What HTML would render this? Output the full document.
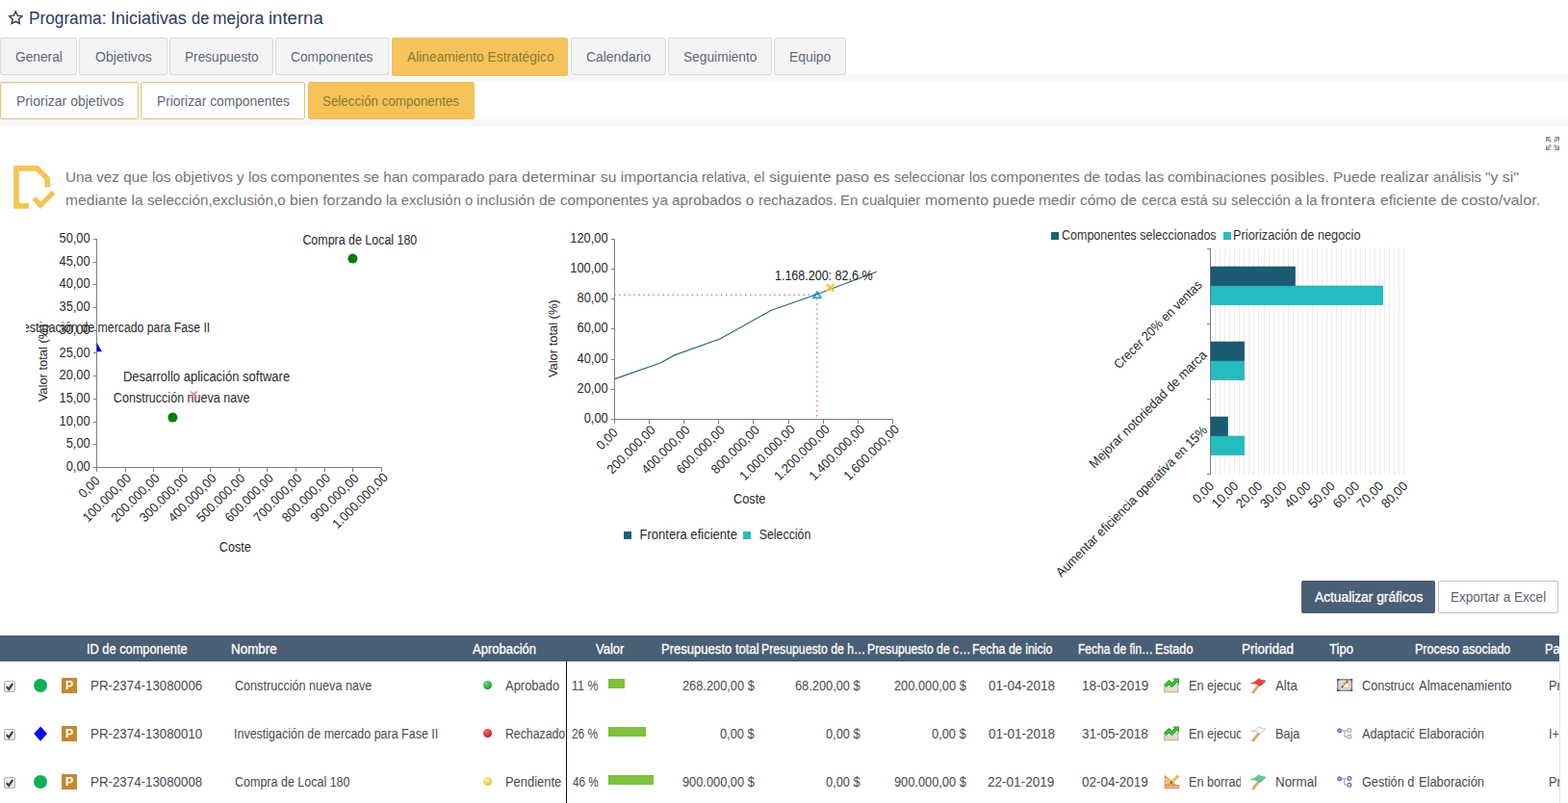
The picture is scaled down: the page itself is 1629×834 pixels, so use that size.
<!DOCTYPE html>
<html lang="es"><head><meta charset="utf-8"><title>Programa: Iniciativas de mejora interna</title>
<style>
html,body{margin:0;padding:0;}
body{width:1629px;height:834px;overflow:hidden;background:#fff;position:relative;
 font-family:"Liberation Sans",sans-serif;color:#444;}
.t{position:absolute;white-space:nowrap;line-height:1;transform-origin:0 0;display:block;}
.b{position:absolute;box-sizing:border-box;}
.tab{position:absolute;box-sizing:border-box;top:39px;height:39px;border:1px solid #dadada;border-radius:2px;background:#f4f4f4;}
.tab.sel{background:#f6c35a;border-color:#e9c06c;height:40px;}
.tab2{position:absolute;box-sizing:border-box;top:85px;height:39px;border:1px solid #e6c37c;border-radius:2px;background:#fff;box-shadow:inset 0 0 0 1px #fffae2;}
.tab2.sel{background:#f6c35a;border-color:#e9c06c;box-shadow:none;}
.strip{position:absolute;left:0;width:1629px;background:#f7f7f7;}
.clip{position:absolute;overflow:hidden;}
svg{position:absolute;left:0;top:0;overflow:visible;}
svg text{font-family:"Liberation Sans",sans-serif;}
</style></head><body>
<svg width="40" height="36" viewBox="0 0 40 36"><path d="M16.30 12.00 L18.30 16.15 L22.86 16.77 L19.53 19.95 L20.36 24.48 L16.30 22.30 L12.24 24.48 L13.07 19.95 L9.74 16.77 L14.30 16.15 Z" fill="none" stroke="#2b3b5c" stroke-width="1.45" stroke-linejoin="miter" stroke-miterlimit="10"/></svg>
<h1 style="margin:0;font-weight:normal"><span class="t" style="left:29.61px;top:10px;font-size:18px;transform:scaleX(0.9570);color:#2b3b5c">Programa: </span><span class="t" style="left:114.75px;top:10px;font-size:18px;transform:scaleX(0.9972);color:#2b3b5c">Iniciativas </span><span class="t" style="left:198.62px;top:10px;font-size:18px;transform:scaleX(0.9126);color:#2b3b5c">de </span><span class="t" style="left:221.39px;top:10px;font-size:18px;transform:scaleX(0.9672);color:#2b3b5c">mejora </span><span class="t" style="left:279.36px;top:10px;font-size:18px;transform:scaleX(1.0315);color:#2b3b5c">interna</span></h1>
<div class="strip" style="top:78px;height:7px"></div>
<div class="strip" style="top:124px;height:7px"></div>
<div class="tab" style="left:0px;width:80.0px"></div>
<span class="t" style="left:15.91px;top:52px;font-size:14px;transform:scaleX(0.9813);color:#5d6879;">General</span>
<div class="tab" style="left:82px;width:92.0px"></div>
<span class="t" style="left:98.55px;top:52px;font-size:14px;transform:scaleX(1.0070);color:#5d6879;">Objetivos</span>
<div class="tab" style="left:176px;width:108.0px"></div>
<span class="t" style="left:192.13px;top:52px;font-size:14px;transform:scaleX(0.9753);color:#5d6879;">Presupuesto</span>
<div class="tab" style="left:286px;width:118.0px"></div>
<span class="t" style="left:302.21px;top:52px;font-size:14px;transform:scaleX(0.9796);color:#5d6879;">Componentes</span>
<div class="tab sel" style="left:407px;width:183.4px"></div>
<span class="t" style="left:422.60px;top:52px;font-size:14px;transform:scaleX(0.9851);color:#8a7a2e;">Alineamiento Estratégico</span>
<div class="tab" style="left:593px;width:99.0px"></div>
<span class="t" style="left:609.31px;top:52px;font-size:14px;transform:scaleX(0.9910);color:#5d6879;">Calendario</span>
<div class="tab" style="left:694px;width:108.0px"></div>
<span class="t" style="left:709.81px;top:52px;font-size:14px;transform:scaleX(0.9824);color:#5d6879;">Seguimiento</span>
<div class="tab" style="left:804px;width:75.0px"></div>
<span class="t" style="left:819.81px;top:52px;font-size:14px;transform:scaleX(0.9928);color:#5d6879;">Equipo</span>
<div class="tab2" style="left:0px;width:144.0px"></div>
<span class="t" style="left:16.50px;top:98px;font-size:14px;transform:scaleX(1.0023);color:#5d6879;">Priorizar objetivos</span>
<div class="tab2" style="left:146px;width:171.0px"></div>
<span class="t" style="left:162.92px;top:98px;font-size:14px;transform:scaleX(0.9845);color:#5d6879;">Priorizar componentes</span>
<div class="tab2 sel" style="left:319.5px;width:173.5px"></div>
<span class="t" style="left:335.23px;top:98px;font-size:14px;transform:scaleX(0.9556);color:#8a7a2e;">Selección componentes</span>
<svg width="1629" height="170" viewBox="0 0 1629 170"><path d="M1606 142 L1610.6 142 L1606 146.6 Z" fill="#c4c4c4" stroke="none"/><path d="M1607.6 143.6 L1610.4 146.4" stroke="#8c8c8c" stroke-width="2.6" stroke-linecap="round" fill="none"/><path d="M1607.8 143.8 L1610.3 146.3" stroke="#c0c0c0" stroke-width="1.3" stroke-linecap="round" fill="none"/><path d="M1610.8 142.5 H1606.5 V146.8" stroke="#868686" stroke-width="1" fill="none"/><path d="M1620 142 L1615.4 142 L1620 146.6 Z" fill="#c4c4c4" stroke="none"/><path d="M1618.4 143.6 L1615.6 146.4" stroke="#8c8c8c" stroke-width="2.6" stroke-linecap="round" fill="none"/><path d="M1618.2 143.8 L1615.7 146.3" stroke="#c0c0c0" stroke-width="1.3" stroke-linecap="round" fill="none"/><path d="M1615.2 142.5 H1619.5 V146.8" stroke="#868686" stroke-width="1" fill="none"/><path d="M1606 156 L1610.6 156 L1606 151.4 Z" fill="#c4c4c4" stroke="none"/><path d="M1607.6 154.4 L1610.4 151.6" stroke="#8c8c8c" stroke-width="2.6" stroke-linecap="round" fill="none"/><path d="M1607.8 154.2 L1610.3 151.7" stroke="#c0c0c0" stroke-width="1.3" stroke-linecap="round" fill="none"/><path d="M1610.8 155.5 H1606.5 V151.2" stroke="#868686" stroke-width="1" fill="none"/><path d="M1620 156 L1615.4 156 L1620 151.4 Z" fill="#c4c4c4" stroke="none"/><path d="M1618.4 154.4 L1615.6 151.6" stroke="#8c8c8c" stroke-width="2.6" stroke-linecap="round" fill="none"/><path d="M1618.2 154.2 L1615.7 151.7" stroke="#c0c0c0" stroke-width="1.3" stroke-linecap="round" fill="none"/><path d="M1615.2 155.5 H1619.5 V151.2" stroke="#868686" stroke-width="1" fill="none"/></svg>
<svg width="70" height="230" viewBox="0 0 70 230"><g fill="none" stroke="#f5c452" stroke-width="5.6">
<path d="M30 213.9 H17 V174.9 H38.6 L49.2 185.6 V194.3"/>
<path d="M35.3 205.6 L42 213.3 L55.6 199.6" stroke-width="5.2"/></g></svg>
<p style="margin:0"><span class="t" style="left:67.53px;top:176px;font-size:15px;transform:scaleX(1.0169);color:#757575">Una vez que los objetivos y los </span><span class="t" style="left:281.18px;top:176px;font-size:15px;transform:scaleX(1.0263);color:#757575">componentes se han </span><span class="t" style="left:428.40px;top:176px;font-size:15px;transform:scaleX(1.0026);color:#757575">comparado para </span><span class="t" style="left:542.05px;top:176px;font-size:15px;transform:scaleX(1.0771);color:#757575">determinar </span><span class="t" style="left:623.79px;top:176px;font-size:15px;transform:scaleX(1.0366);color:#757575">su importancia </span><span class="t" style="left:729.29px;top:176px;font-size:15px;transform:scaleX(0.9586);color:#757575">relativa, el </span><span class="t" style="left:798.77px;top:176px;font-size:15px;transform:scaleX(1.0743);color:#757575">siguiente paso es </span><span class="t" style="left:928.71px;top:176px;font-size:15px;transform:scaleX(0.9703);color:#757575">seleccionar los </span><span class="t" style="left:1028.98px;top:176px;font-size:15px;transform:scaleX(1.0291);color:#757575">componentes de todas las </span><span class="t" style="left:1213.49px;top:176px;font-size:15px;transform:scaleX(1.0242);color:#757575">combinaciones </span><span class="t" style="left:1320.23px;top:176px;font-size:15px;transform:scaleX(1.0217);color:#757575">posibles. </span><span class="t" style="left:1384.97px;top:176px;font-size:15px;transform:scaleX(1.0290);color:#757575">Puede realizar </span><span class="t" style="left:1488.80px;top:176px;font-size:15px;transform:scaleX(1.0020);color:#757575">análisis </span><span class="t" style="left:1543.07px;top:176px;font-size:15px;transform:scaleX(1.0485);color:#757575">"y si"</span></p>
<p style="margin:0"><span class="t" style="left:67.71px;top:200px;font-size:15px;transform:scaleX(1.0411);color:#757575">mediante la </span><span class="t" style="left:152.79px;top:200px;font-size:15px;transform:scaleX(1.0139);color:#757575">selección,exclusión,o </span><span class="t" style="left:300.70px;top:200px;font-size:15px;transform:scaleX(1.0524);color:#757575">bien forzando </span><span class="t" style="left:400.81px;top:200px;font-size:15px;transform:scaleX(0.9942);color:#757575">la exclusión o </span><span class="t" style="left:495.26px;top:200px;font-size:15px;transform:scaleX(1.0399);color:#757575">inclusión de </span><span class="t" style="left:581.99px;top:200px;font-size:15px;transform:scaleX(1.0163);color:#757575">componentes ya </span><span class="t" style="left:698.09px;top:200px;font-size:15px;transform:scaleX(1.0226);color:#757575">aprobados o </span><span class="t" style="left:787.65px;top:200px;font-size:15px;transform:scaleX(0.9961);color:#757575">rechazados. </span><span class="t" style="left:873.20px;top:200px;font-size:15px;transform:scaleX(0.9988);color:#757575">En cualquier </span><span class="t" style="left:960.60px;top:200px;font-size:15px;transform:scaleX(1.0544);color:#757575">momento puede </span><span class="t" style="left:1079.32px;top:200px;font-size:15px;transform:scaleX(1.0299);color:#757575">medir cómo de </span><span class="t" style="left:1185.80px;top:200px;font-size:15px;transform:scaleX(0.9938);color:#757575">cerca está su </span><span class="t" style="left:1278.61px;top:200px;font-size:15px;transform:scaleX(0.9857);color:#757575">selección a la </span><span class="t" style="left:1372.28px;top:200px;font-size:15px;transform:scaleX(1.0967);color:#757575">frontera </span><span class="t" style="left:1433.57px;top:200px;font-size:15px;transform:scaleX(1.0447);color:#757575">eficiente de </span><span class="t" style="left:1518.05px;top:200px;font-size:15px;transform:scaleX(1.0839);color:#757575">costo/valor.</span></p>
<svg width="1629" height="660" viewBox="0 0 1629 660" font-size="13">
<defs><clipPath id="c1"><rect x="27" y="230" width="520" height="380"/></clipPath><clipPath id="p1"><rect x="100.5" y="240" width="310" height="245"/></clipPath></defs>
<g stroke="#7f7f7f" stroke-width="1" fill="none" shape-rendering="crispEdges">
<path d="M100.5 248.5 V485.5"/>
<path d="M96.5 485.5 H396.5"/>
<path d="M96.5 485.5 H100.5"/>
<path d="M96.5 461.5 H100.5"/>
<path d="M96.5 438.5 H100.5"/>
<path d="M96.5 414.5 H100.5"/>
<path d="M96.5 390.5 H100.5"/>
<path d="M96.5 366.5 H100.5"/>
<path d="M96.5 343.5 H100.5"/>
<path d="M96.5 319.5 H100.5"/>
<path d="M96.5 295.5 H100.5"/>
<path d="M96.5 272.5 H100.5"/>
<path d="M96.5 248.5 H100.5"/>
<path d="M100.5 485.5 V490.0"/>
<path d="M130.5 485.5 V490.0"/>
<path d="M159.5 485.5 V490.0"/>
<path d="M189.5 485.5 V490.0"/>
<path d="M218.5 485.5 V490.0"/>
<path d="M248.5 485.5 V490.0"/>
<path d="M277.5 485.5 V490.0"/>
<path d="M307.5 485.5 V490.0"/>
<path d="M337.5 485.5 V490.0"/>
<path d="M366.5 485.5 V490.0"/>
<path d="M396.5 485.5 V490.0"/>
</g>
<text x="68.66" y="489.00" font-size="14" textLength="25.05" lengthAdjust="spacingAndGlyphs" fill="#2a2a2a" >0,00</text>
<text x="68.66" y="465.30" font-size="14" textLength="25.05" lengthAdjust="spacingAndGlyphs" fill="#2a2a2a" >5,00</text>
<text x="61.49" y="441.60" font-size="14" textLength="32.21" lengthAdjust="spacingAndGlyphs" fill="#2a2a2a" >10,00</text>
<text x="61.49" y="417.90" font-size="14" textLength="32.21" lengthAdjust="spacingAndGlyphs" fill="#2a2a2a" >15,00</text>
<text x="61.49" y="394.20" font-size="14" textLength="32.21" lengthAdjust="spacingAndGlyphs" fill="#2a2a2a" >20,00</text>
<text x="61.49" y="370.50" font-size="14" textLength="32.21" lengthAdjust="spacingAndGlyphs" fill="#2a2a2a" >25,00</text>
<text x="61.49" y="346.80" font-size="14" textLength="32.21" lengthAdjust="spacingAndGlyphs" fill="#2a2a2a" >30,00</text>
<text x="61.49" y="323.10" font-size="14" textLength="32.21" lengthAdjust="spacingAndGlyphs" fill="#2a2a2a" >35,00</text>
<text x="61.49" y="299.40" font-size="14" textLength="32.21" lengthAdjust="spacingAndGlyphs" fill="#2a2a2a" >40,00</text>
<text x="61.49" y="275.70" font-size="14" textLength="32.21" lengthAdjust="spacingAndGlyphs" fill="#2a2a2a" >45,00</text>
<text x="61.49" y="252.00" font-size="14" textLength="32.21" lengthAdjust="spacingAndGlyphs" fill="#2a2a2a" >50,00</text>
<text transform="translate(104.60,500.30) rotate(-45)" x="-25.05" y="0" font-size="13.6" textLength="25.05" lengthAdjust="spacingAndGlyphs" fill="#2a2a2a">0,00</text>
<text transform="translate(136.97,497.50) rotate(-45)" x="-64.41" y="0" font-size="13.6" textLength="64.41" lengthAdjust="spacingAndGlyphs" fill="#2a2a2a">100.000,00</text>
<text transform="translate(166.54,497.50) rotate(-45)" x="-64.41" y="0" font-size="13.6" textLength="64.41" lengthAdjust="spacingAndGlyphs" fill="#2a2a2a">200.000,00</text>
<text transform="translate(196.11,497.50) rotate(-45)" x="-64.41" y="0" font-size="13.6" textLength="64.41" lengthAdjust="spacingAndGlyphs" fill="#2a2a2a">300.000,00</text>
<text transform="translate(225.68,497.50) rotate(-45)" x="-64.41" y="0" font-size="13.6" textLength="64.41" lengthAdjust="spacingAndGlyphs" fill="#2a2a2a">400.000,00</text>
<text transform="translate(255.25,497.50) rotate(-45)" x="-64.41" y="0" font-size="13.6" textLength="64.41" lengthAdjust="spacingAndGlyphs" fill="#2a2a2a">500.000,00</text>
<text transform="translate(284.82,497.50) rotate(-45)" x="-64.41" y="0" font-size="13.6" textLength="64.41" lengthAdjust="spacingAndGlyphs" fill="#2a2a2a">600.000,00</text>
<text transform="translate(314.39,497.50) rotate(-45)" x="-64.41" y="0" font-size="13.6" textLength="64.41" lengthAdjust="spacingAndGlyphs" fill="#2a2a2a">700.000,00</text>
<text transform="translate(343.96,497.50) rotate(-45)" x="-64.41" y="0" font-size="13.6" textLength="64.41" lengthAdjust="spacingAndGlyphs" fill="#2a2a2a">800.000,00</text>
<text transform="translate(373.53,497.50) rotate(-45)" x="-64.41" y="0" font-size="13.6" textLength="64.41" lengthAdjust="spacingAndGlyphs" fill="#2a2a2a">900.000,00</text>
<text transform="translate(403.90,496.70) rotate(-45)" x="-75.14" y="0" font-size="13.6" textLength="75.14" lengthAdjust="spacingAndGlyphs" fill="#2a2a2a">1.000.000,00</text>
<text x="227.79" y="573.00" font-size="14" textLength="32.91" lengthAdjust="spacingAndGlyphs" fill="#2a2a2a" >Coste</text>
<g clip-path="url(#c1)">
<text transform="translate(48.80,417.30) rotate(-90)" x="0" y="0" font-size="13.6" textLength="80.80" lengthAdjust="spacingAndGlyphs" fill="#2a2a2a">Valor total (%)</text>
<text x="6.82" y="345.00" font-size="14" textLength="91.60" lengthAdjust="spacingAndGlyphs" fill="#2a2a2a" >Investigación de</text>
<text x="101.61" y="345.00" font-size="14" textLength="116.64" lengthAdjust="spacingAndGlyphs" fill="#2a2a2a" >mercado para Fase II</text>
</g>
<text x="314.38" y="253.90" font-size="14" textLength="118.92" lengthAdjust="spacingAndGlyphs" fill="#2a2a2a" >Compra de Local 180</text>
<text x="127.88" y="396.20" font-size="14" textLength="173.28" lengthAdjust="spacingAndGlyphs" fill="#2a2a2a" >Desarrollo aplicación software</text>
<text x="117.87" y="418.10" font-size="14" textLength="141.65" lengthAdjust="spacingAndGlyphs" fill="#2a2a2a" >Construcción nueva nave</text>
<circle cx="366.4" cy="268.6" r="5" fill="#0a7d0a"/>
<circle cx="179.4" cy="433.6" r="5" fill="#0a7d0a"/>
<path d="M198.3 406.6 L204.7 413 M204.7 406.6 L198.3 413" stroke="#ee7d86" stroke-width="1.6" fill="none"/>
<path d="M100.5 355.6 L105.9 365.2 H95.1 Z" fill="#0000d0" clip-path="url(#p1)"/>
<g stroke="#7f7f7f" stroke-width="1" fill="none" shape-rendering="crispEdges">
<path d="M638.5 248.5 V435.5"/>
<path d="M634.5 435.5 H927.5"/>
<path d="M634.5 435.5 H638.5"/>
<path d="M634.5 404.5 H638.5"/>
<path d="M634.5 373.5 H638.5"/>
<path d="M634.5 341.5 H638.5"/>
<path d="M634.5 310.5 H638.5"/>
<path d="M634.5 279.5 H638.5"/>
<path d="M634.5 248.5 H638.5"/>
<path d="M638.5 435.5 V440.0"/>
<path d="M674.5 435.5 V440.0"/>
<path d="M710.5 435.5 V440.0"/>
<path d="M746.5 435.5 V440.0"/>
<path d="M782.5 435.5 V440.0"/>
<path d="M819.5 435.5 V440.0"/>
<path d="M855.5 435.5 V440.0"/>
<path d="M891.5 435.5 V440.0"/>
<path d="M927.5 435.5 V440.0"/>
</g>
<text x="606.66" y="439.00" font-size="14" textLength="25.05" lengthAdjust="spacingAndGlyphs" fill="#2a2a2a" >0,00</text>
<text x="599.49" y="407.83" font-size="14" textLength="32.21" lengthAdjust="spacingAndGlyphs" fill="#2a2a2a" >20,00</text>
<text x="599.49" y="376.66" font-size="14" textLength="32.21" lengthAdjust="spacingAndGlyphs" fill="#2a2a2a" >40,00</text>
<text x="599.49" y="345.49" font-size="14" textLength="32.21" lengthAdjust="spacingAndGlyphs" fill="#2a2a2a" >60,00</text>
<text x="599.49" y="314.32" font-size="14" textLength="32.21" lengthAdjust="spacingAndGlyphs" fill="#2a2a2a" >80,00</text>
<text x="592.32" y="283.15" font-size="14" textLength="39.36" lengthAdjust="spacingAndGlyphs" fill="#2a2a2a" >100,00</text>
<text x="592.32" y="251.98" font-size="14" textLength="39.36" lengthAdjust="spacingAndGlyphs" fill="#2a2a2a" >120,00</text>
<text transform="translate(642.60,450.30) rotate(-45)" x="-25.05" y="0" font-size="13.6" textLength="25.05" lengthAdjust="spacingAndGlyphs" fill="#2a2a2a">0,00</text>
<text transform="translate(681.52,447.50) rotate(-45)" x="-64.41" y="0" font-size="13.6" textLength="64.41" lengthAdjust="spacingAndGlyphs" fill="#2a2a2a">200.000,00</text>
<text transform="translate(717.64,447.50) rotate(-45)" x="-64.41" y="0" font-size="13.6" textLength="64.41" lengthAdjust="spacingAndGlyphs" fill="#2a2a2a">400.000,00</text>
<text transform="translate(753.76,447.50) rotate(-45)" x="-64.41" y="0" font-size="13.6" textLength="64.41" lengthAdjust="spacingAndGlyphs" fill="#2a2a2a">600.000,00</text>
<text transform="translate(789.88,447.50) rotate(-45)" x="-64.41" y="0" font-size="13.6" textLength="64.41" lengthAdjust="spacingAndGlyphs" fill="#2a2a2a">800.000,00</text>
<text transform="translate(826.80,446.70) rotate(-45)" x="-75.14" y="0" font-size="13.6" textLength="75.14" lengthAdjust="spacingAndGlyphs" fill="#2a2a2a">1.000.000,00</text>
<text transform="translate(862.92,446.70) rotate(-45)" x="-75.14" y="0" font-size="13.6" textLength="75.14" lengthAdjust="spacingAndGlyphs" fill="#2a2a2a">1.200.000,00</text>
<text transform="translate(899.04,446.70) rotate(-45)" x="-75.14" y="0" font-size="13.6" textLength="75.14" lengthAdjust="spacingAndGlyphs" fill="#2a2a2a">1.400.000,00</text>
<text transform="translate(935.16,446.70) rotate(-45)" x="-75.14" y="0" font-size="13.6" textLength="75.14" lengthAdjust="spacingAndGlyphs" fill="#2a2a2a">1.600.000,00</text>
<text x="762.06" y="523.00" font-size="14" textLength="33.26" lengthAdjust="spacingAndGlyphs" fill="#2a2a2a" >Coste</text>
<text transform="translate(579.30,392.10) rotate(-90)" x="0" y="0" font-size="13.6" textLength="80.80" lengthAdjust="spacingAndGlyphs" fill="#2a2a2a">Valor total (%)</text>
<path d="M638.2 306.3 H848.9 M848.9 310.2 V435" fill="none" stroke="#dd7a96" stroke-width="1.5" stroke-dasharray="1.5 3.53"/>
<path d="M848.9 303.3 L852.7 309.3 H845.1 Z" fill="none" stroke="#2ab0b2" stroke-width="2"/>
<path d="M638.5 393.6 L686.7 376.7 L700.6 368.9 L747.9 352 L801.3 322.3 L847.8 306 L910.8 282.3" fill="none" stroke="#256779" stroke-width="1.15"/>
<path d="M858.6 295.2 L866.4 302.4 M866.4 295.2 L858.6 302.4" stroke="#f4c421" stroke-width="2.1" fill="none"/>
<text x="804.96" y="291.10" font-size="14" textLength="101.58" lengthAdjust="spacingAndGlyphs" fill="#222" >1.168.200: 82,6 %</text>
<rect x="648" y="552" width="8" height="8" fill="#1d5f75"/>
<text x="664.48" y="560.00" font-size="14" textLength="101.48" lengthAdjust="spacingAndGlyphs" fill="#2a2a2a" >Frontera eficiente</text>
<rect x="772" y="552" width="8" height="8" fill="#27bcc0"/>
<text x="788.77" y="560.00" font-size="14" textLength="53.52" lengthAdjust="spacingAndGlyphs" fill="#2a2a2a" >Selección</text>
<g stroke="#ebebeb" stroke-width="1" fill="none" shape-rendering="crispEdges">
<path d="M1262.5 258 V492.5"/>
<path d="M1267.5 258 V492.5"/>
<path d="M1272.5 258 V492.5"/>
<path d="M1277.5 258 V492.5"/>
<path d="M1282.5 258 V492.5"/>
<path d="M1287.5 258 V492.5"/>
<path d="M1292.5 258 V492.5"/>
<path d="M1297.5 258 V492.5"/>
<path d="M1302.5 258 V492.5"/>
<path d="M1307.5 258 V492.5"/>
<path d="M1313.5 258 V492.5"/>
<path d="M1318.5 258 V492.5"/>
<path d="M1323.5 258 V492.5"/>
<path d="M1328.5 258 V492.5"/>
<path d="M1333.5 258 V492.5"/>
<path d="M1338.5 258 V492.5"/>
<path d="M1343.5 258 V492.5"/>
<path d="M1348.5 258 V492.5"/>
<path d="M1353.5 258 V492.5"/>
<path d="M1358.5 258 V492.5"/>
<path d="M1363.5 258 V492.5"/>
<path d="M1368.5 258 V492.5"/>
<path d="M1373.5 258 V492.5"/>
<path d="M1378.5 258 V492.5"/>
<path d="M1383.5 258 V492.5"/>
<path d="M1388.5 258 V492.5"/>
<path d="M1393.5 258 V492.5"/>
<path d="M1398.5 258 V492.5"/>
<path d="M1403.5 258 V492.5"/>
<path d="M1408.5 258 V492.5"/>
<path d="M1413.5 258 V492.5"/>
<path d="M1418.5 258 V492.5"/>
<path d="M1423.5 258 V492.5"/>
<path d="M1428.5 258 V492.5"/>
<path d="M1433.5 258 V492.5"/>
<path d="M1438.5 258 V492.5"/>
<path d="M1443.5 258 V492.5"/>
<path d="M1448.5 258 V492.5"/>
<path d="M1453.5 258 V492.5"/>
<path d="M1458.5 258 V492.5"/>
</g>
<g stroke="#7f7f7f" stroke-width="1" fill="none" shape-rendering="crispEdges">
<path d="M1257.5 258 V493"/>
<path d="M1254 258.5 H1257.5"/>
<path d="M1254 336.5 H1257.5"/>
<path d="M1254 414.5 H1257.5"/>
<path d="M1254 492.5 H1257.5"/>
</g>
<rect x="1258" y="277" width="87.5" height="20" fill="#1b5b73" stroke="#174e63" stroke-width="0.6"/>
<rect x="1258" y="297" width="178.7" height="19.6" fill="#25bcc0" stroke="#1fa3a7" stroke-width="0.6"/>
<rect x="1258" y="355" width="34.7" height="20" fill="#1b5b73" stroke="#174e63" stroke-width="0.6"/>
<rect x="1258" y="375" width="34.7" height="19.6" fill="#25bcc0" stroke="#1fa3a7" stroke-width="0.6"/>
<rect x="1258" y="433" width="17.6" height="20" fill="#1b5b73" stroke="#174e63" stroke-width="0.6"/>
<rect x="1258" y="453" width="34.7" height="19.6" fill="#25bcc0" stroke="#1fa3a7" stroke-width="0.6"/>
<rect x="1092" y="241" width="8" height="8" fill="#1d5f75"/>
<text x="1102.97" y="249.00" font-size="14" textLength="160.65" lengthAdjust="spacingAndGlyphs" fill="#333" >Componentes seleccionados</text>
<rect x="1271" y="241" width="8" height="8" fill="#27bcc0"/>
<text x="1281.10" y="249.00" font-size="14" textLength="132.43" lengthAdjust="spacingAndGlyphs" fill="#333" >Priorización de negocio</text>
<text transform="translate(1249.70,296.70) rotate(-45)" x="-123.00" y="0" font-size="13.6" textLength="123.00" lengthAdjust="spacingAndGlyphs" fill="#2a2a2a">Crecer 20% en ventas</text>
<text transform="translate(1254.50,369.60) rotate(-45)" x="-166.00" y="0" font-size="13.6" textLength="166.00" lengthAdjust="spacingAndGlyphs" fill="#2a2a2a">Mejorar notoriedad de marca</text>
<text transform="translate(1255.00,447.60) rotate(-45)" x="-215.50" y="0" font-size="13.6" textLength="215.50" lengthAdjust="spacingAndGlyphs" fill="#2a2a2a">Aumentar eficiencia operativa en 15%</text>
<text transform="translate(1262.10,505.80) rotate(-45)" x="-25.05" y="0" font-size="13.6" textLength="25.05" lengthAdjust="spacingAndGlyphs" fill="#2a2a2a">0,00</text>
<text transform="translate(1287.24,505.80) rotate(-45)" x="-32.21" y="0" font-size="13.6" textLength="32.21" lengthAdjust="spacingAndGlyphs" fill="#2a2a2a">10,00</text>
<text transform="translate(1312.38,505.80) rotate(-45)" x="-32.21" y="0" font-size="13.6" textLength="32.21" lengthAdjust="spacingAndGlyphs" fill="#2a2a2a">20,00</text>
<text transform="translate(1337.52,505.80) rotate(-45)" x="-32.21" y="0" font-size="13.6" textLength="32.21" lengthAdjust="spacingAndGlyphs" fill="#2a2a2a">30,00</text>
<text transform="translate(1362.66,505.80) rotate(-45)" x="-32.21" y="0" font-size="13.6" textLength="32.21" lengthAdjust="spacingAndGlyphs" fill="#2a2a2a">40,00</text>
<text transform="translate(1387.80,505.80) rotate(-45)" x="-32.21" y="0" font-size="13.6" textLength="32.21" lengthAdjust="spacingAndGlyphs" fill="#2a2a2a">50,00</text>
<text transform="translate(1412.94,505.80) rotate(-45)" x="-32.21" y="0" font-size="13.6" textLength="32.21" lengthAdjust="spacingAndGlyphs" fill="#2a2a2a">60,00</text>
<text transform="translate(1438.08,505.80) rotate(-45)" x="-32.21" y="0" font-size="13.6" textLength="32.21" lengthAdjust="spacingAndGlyphs" fill="#2a2a2a">70,00</text>
<text transform="translate(1463.22,505.80) rotate(-45)" x="-32.21" y="0" font-size="13.6" textLength="32.21" lengthAdjust="spacingAndGlyphs" fill="#2a2a2a">80,00</text>
</svg>
<div class="b" style="left:1352px;top:603px;width:139px;height:34px;background:#4a5e74;border-radius:2px"></div>
<span class="t" style="left:1366.10px;top:613px;font-size:14px;transform:scaleX(0.9816);color:#fff;-webkit-text-stroke:0.3px #fff;">Actualizar gráficos</span>
<div class="b" style="left:1494px;top:603px;width:125px;height:34px;background:#fff;border:1px solid #c2c2c2;border-radius:2px"></div>
<span class="t" style="left:1506.94px;top:613px;font-size:14px;transform:scaleX(0.9652);color:#5b6473;">Exportar a Excel</span>
<div class="b" style="left:0;top:660px;width:1620px;height:27px;background:#4a5e74"></div>
<div class="b" style="left:1620px;top:687px;width:1px;height:147px;background:#d9dee6"></div>
<div class="b" style="left:588px;top:687px;width:1px;height:147px;background:#111"></div>
<span class="t" style="left:89.66px;top:667px;font-size:14px;transform:scaleX(0.9143);color:#fff;-webkit-text-stroke:0.3px #fff;">ID de componente</span>
<span class="t" style="left:239.65px;top:667px;font-size:14px;transform:scaleX(0.9584);color:#fff;-webkit-text-stroke:0.3px #fff;">Nombre</span>
<span class="t" style="left:490.70px;top:667px;font-size:14px;transform:scaleX(0.9335);color:#fff;-webkit-text-stroke:0.3px #fff;">Aprobación</span>
<span class="t" style="left:619.35px;top:667px;font-size:14px;transform:scaleX(0.9299);color:#fff;-webkit-text-stroke:0.3px #fff;">Valor</span>
<span class="t" style="left:686.57px;top:667px;font-size:14px;transform:scaleX(0.9322);color:#fff;-webkit-text-stroke:0.3px #fff;">Presupuesto total</span>
<span class="t" style="left:790.94px;top:667px;font-size:14px;transform:scaleX(0.8754);color:#fff;-webkit-text-stroke:0.3px #fff;">Presupuesto de h…</span>
<span class="t" style="left:901.44px;top:667px;font-size:14px;transform:scaleX(0.8737);color:#fff;-webkit-text-stroke:0.3px #fff;">Presupuesto de c…</span>
<span class="t" style="left:1009.73px;top:667px;font-size:14px;transform:scaleX(0.8854);color:#fff;-webkit-text-stroke:0.3px #fff;">Fecha de inicio</span>
<span class="t" style="left:1119.76px;top:667px;font-size:14px;transform:scaleX(0.8575);color:#fff;-webkit-text-stroke:0.3px #fff;">Fecha de fin…</span>
<span class="t" style="left:1199.91px;top:667px;font-size:14px;transform:scaleX(0.9045);color:#fff;-webkit-text-stroke:0.3px #fff;">Estado</span>
<span class="t" style="left:1289.84px;top:667px;font-size:14px;transform:scaleX(0.9658);color:#fff;-webkit-text-stroke:0.3px #fff;">Prioridad</span>
<span class="t" style="left:1380.82px;top:667px;font-size:14px;transform:scaleX(0.9323);color:#fff;-webkit-text-stroke:0.3px #fff;">Tipo</span>
<span class="t" style="left:1469.82px;top:667px;font-size:14px;transform:scaleX(0.8923);color:#fff;-webkit-text-stroke:0.3px #fff;">Proceso asociado</span>
<div class="clip" style="left:1600px;top:660px;width:20px;height:27px"><span class="t" style="left:4.70px;top:7px;font-size:14px;transform:scaleX(0.9053);color:#fff;-webkit-text-stroke:0.3px #fff;">Padre</span></div>
<div class="b" style="left:4px;top:707px;width:12px;height:12px;border:1px solid #b2b2b2;border-radius:2px;background:linear-gradient(#f3f3f3,#e3e3e3)"></div>
<svg width="1629" height="834" viewBox="0 0 1629 834"><path d="M6.8 713.3 L9.2 715.8 L13.2 709.8" fill="none" stroke="#444" stroke-width="2.3"/></svg>
<div class="b" style="left:35px;top:705px;width:14px;height:14px;border-radius:50%;background:#0fae57"></div>
<div class="b" style="left:64px;top:704px;width:16px;height:16px;background:#c08b2d"></div>
<span class="t" style="left:67.99px;top:706px;font-size:12px;transform:scaleX(1.0147);color:#fff;font-weight:bold;">P</span>
<span class="t" style="left:93.55px;top:705px;font-size:14px;transform:scaleX(0.9510);color:#484a4e;">PR-2374-13080006</span>
<span class="t" style="left:243.97px;top:705px;font-size:14px;transform:scaleX(0.9004);color:#484a4e;">Construcción nueva nave</span>
<div class="b" style="left:502px;top:707px;width:9px;height:9px;border-radius:50%;background:radial-gradient(circle at 35% 30%,#6fdc6f,#1f9a2a 75%)"></div>
<div class="clip" style="left:520px;top:702px;width:67.5px;height:20px"><span class="t" style="left:5.30px;top:3px;font-size:14px;transform:scaleX(0.9244);color:#484a4e;">Aprobado</span></div>
<span class="t" style="left:593.86px;top:705px;font-size:14px;transform:scaleX(0.8908);color:#484a4e;">11 %</span>
<div class="b" style="left:632px;top:705px;width:17px;height:10px;background:#7dc23c"></div>
<span class="t" style="left:708.51px;top:705px;font-size:14px;transform:scaleX(0.9146);color:#484a4e;">268.200,00 $</span>
<span class="t" style="left:825.75px;top:705px;font-size:14px;transform:scaleX(0.9146);color:#484a4e;">68.200,00 $</span>
<span class="t" style="left:928.61px;top:705px;font-size:14px;transform:scaleX(0.9146);color:#484a4e;">200.000,00 $</span>
<span class="t" style="left:1026.52px;top:705px;font-size:14px;transform:scaleX(0.9639);color:#484a4e;">01-04-2018</span>
<span class="t" style="left:1123.68px;top:705px;font-size:14px;transform:scaleX(0.9678);color:#484a4e;">18-03-2019</span>
<svg width="1629" height="834" viewBox="0 0 1629 834"><g transform="translate(1209,704)"><rect x="0.9" y="7.2" width="14" height="7.6" fill="#efe3d2" stroke="#a39a8c" stroke-width="0.9"/>
<path d="M1.5 10.5 H14.5 M1.5 12.6 H14.5" stroke="#d9c9b4" stroke-width="0.7"/>
<path d="M1.4 8.6 L5.6 4.6 L8.4 7.6 L13 3" fill="none" stroke="#1f8f2c" stroke-width="3.6" stroke-linejoin="miter"/>
<path d="M9.4 0.5 H15.9 V7 Z" fill="#1f8f2c"/>
<path d="M1.6 8.6 L5.6 4.8 L8.4 7.8 L13 3.2" fill="none" stroke="#43c443" stroke-width="1.9"/>
<path d="M10.9 1.2 H15.2 V5.5 Z" fill="#43c443"/></g></svg>
<div class="clip" style="left:1230px;top:702px;width:59px;height:20px"><span class="t" style="left:4.70px;top:3px;font-size:14px;transform:scaleX(0.9054);color:#484a4e;">En ejecución</span></div>
<svg width="1629" height="834" viewBox="0 0 1629 834"><g transform="translate(1299,704)"><path d="M8.8 7.6 L2.9 15" stroke="#b98a55" stroke-width="2.5" stroke-linecap="round"/>
<path d="M8.6 7.9 L3.1 14.8" stroke="#e9b983" stroke-width="1.1" stroke-linecap="round"/>
<path d="M0.5 5.8 C3.4 5.2 6.2 3.2 8.6 0.9 C10.8 2.2 13.4 2.9 16 3.1 C14.2 4.6 12.4 6.4 10.9 8.2 C9.2 7.9 7.6 6.9 5.8 6.2 C4 5.6 2.2 5.8 0.5 5.8 Z" fill="#e8413c" stroke="#c7312d" stroke-width="0.7" stroke-linejoin="round"/></g></svg>
<span class="t" style="left:1325.10px;top:705px;font-size:14px;transform:scaleX(0.9482);color:#484a4e;">Alta</span>
<svg width="1629" height="834" viewBox="0 0 1629 834"><g transform="translate(1389,704)"><rect x="0.1" y="1.1" width="16" height="12.8" fill="#5f86c8"/>
<path d="M0.1 1.1 h3 v0 l-3 3z M16.1 1.1 h-3 l3 3z M0.1 13.9 h3 l-3 -3z M16.1 13.9 h-3 l3 -3z" fill="#2f5da8"/>
<rect x="1.5" y="2.4" width="13.2" height="10.2" rx="2.6" fill="#f3e2cf" stroke="#caa98d" stroke-width="0.8"/>
<rect x="4" y="5.6" width="8.2" height="5" fill="#fdfdfd" stroke="#9fb2b8" stroke-width="0.8"/>
<path d="M5.6 9 L11.4 2.8" stroke="#c9a227" stroke-width="1.9"/>
<path d="M9.6 4.7 L11.6 2.6" stroke="#e0524d" stroke-width="2"/>
<path d="M5 9.7 L6 8.6" stroke="#222" stroke-width="1.3"/></g></svg>
<div class="clip" style="left:1410px;top:702px;width:59px;height:20px"><span class="t" style="left:5.17px;top:3px;font-size:14px;transform:scaleX(0.9053);color:#484a4e;">Construcción</span></div>
<span class="t" style="left:1473.80px;top:705px;font-size:14px;transform:scaleX(0.9238);color:#484a4e;">Almacenamiento</span>
<div class="clip" style="left:1605px;top:702px;width:15px;height:20px"><span class="t" style="left:4.40px;top:3px;font-size:14px;transform:scaleX(0.9053);color:#484a4e;">Programa</span></div>
<div class="b" style="left:4px;top:757px;width:12px;height:12px;border:1px solid #b2b2b2;border-radius:2px;background:linear-gradient(#f3f3f3,#e3e3e3)"></div>
<svg width="1629" height="834" viewBox="0 0 1629 834"><path d="M6.8 763.3 L9.2 765.8 L13.2 759.8" fill="none" stroke="#444" stroke-width="2.3"/></svg>
<svg width="1629" height="834" viewBox="0 0 1629 834"><path d="M42.1 754.4 L49 762.1 L42.1 769.8 L35.2 762.1 Z" fill="#0a0af5"/></svg>
<div class="b" style="left:64px;top:754px;width:16px;height:16px;background:#c08b2d"></div>
<span class="t" style="left:67.99px;top:756px;font-size:12px;transform:scaleX(1.0147);color:#fff;font-weight:bold;">P</span>
<span class="t" style="left:93.55px;top:755px;font-size:14px;transform:scaleX(0.9506);color:#484a4e;">PR-2374-13080010</span>
<span class="t" style="left:243.49px;top:755px;font-size:14px;transform:scaleX(0.8913);color:#484a4e;">Investigación de mercado para Fase II</span>
<div class="b" style="left:502px;top:757px;width:9px;height:9px;border-radius:50%;background:radial-gradient(circle at 35% 30%,#ee7474,#bd1d22 75%)"></div>
<div class="clip" style="left:520px;top:752px;width:67.5px;height:20px"><span class="t" style="left:4.93px;top:3px;font-size:14px;transform:scaleX(0.8778);color:#484a4e;">Rechazado</span></div>
<span class="t" style="left:594.20px;top:755px;font-size:14px;transform:scaleX(0.8502);color:#484a4e;">26 %</span>
<div class="b" style="left:632px;top:755px;width:39px;height:10px;background:#7dc23c"></div>
<span class="t" style="left:747.66px;top:755px;font-size:14px;transform:scaleX(0.9146);color:#484a4e;">0,00 $</span>
<span class="t" style="left:857.76px;top:755px;font-size:14px;transform:scaleX(0.9146);color:#484a4e;">0,00 $</span>
<span class="t" style="left:967.76px;top:755px;font-size:14px;transform:scaleX(0.9146);color:#484a4e;">0,00 $</span>
<span class="t" style="left:1026.52px;top:755px;font-size:14px;transform:scaleX(0.9639);color:#484a4e;">01-01-2018</span>
<span class="t" style="left:1124.22px;top:755px;font-size:14px;transform:scaleX(0.9596);color:#484a4e;">31-05-2018</span>
<svg width="1629" height="834" viewBox="0 0 1629 834"><g transform="translate(1209,754)"><rect x="0.9" y="7.2" width="14" height="7.6" fill="#efe3d2" stroke="#a39a8c" stroke-width="0.9"/>
<path d="M1.5 10.5 H14.5 M1.5 12.6 H14.5" stroke="#d9c9b4" stroke-width="0.7"/>
<path d="M1.4 8.6 L5.6 4.6 L8.4 7.6 L13 3" fill="none" stroke="#1f8f2c" stroke-width="3.6" stroke-linejoin="miter"/>
<path d="M9.4 0.5 H15.9 V7 Z" fill="#1f8f2c"/>
<path d="M1.6 8.6 L5.6 4.8 L8.4 7.8 L13 3.2" fill="none" stroke="#43c443" stroke-width="1.9"/>
<path d="M10.9 1.2 H15.2 V5.5 Z" fill="#43c443"/></g></svg>
<div class="clip" style="left:1230px;top:752px;width:59px;height:20px"><span class="t" style="left:4.70px;top:3px;font-size:14px;transform:scaleX(0.9054);color:#484a4e;">En ejecución</span></div>
<svg width="1629" height="834" viewBox="0 0 1629 834"><g transform="translate(1299,754)"><path d="M8.8 7.6 L2.9 15" stroke="#b98a55" stroke-width="2.5" stroke-linecap="round"/>
<path d="M8.6 7.9 L3.1 14.8" stroke="#e9b983" stroke-width="1.1" stroke-linecap="round"/>
<path d="M0.5 5.8 C3.4 5.2 6.2 3.2 8.6 0.9 C10.8 2.2 13.4 2.9 16 3.1 C14.2 4.6 12.4 6.4 10.9 8.2 C9.2 7.9 7.6 6.9 5.8 6.2 C4 5.6 2.2 5.8 0.5 5.8 Z" fill="#f4f4f4" stroke="#b5b5b5" stroke-width="0.7" stroke-linejoin="round"/></g></svg>
<span class="t" style="left:1324.80px;top:755px;font-size:14px;transform:scaleX(0.9054);color:#484a4e;">Baja</span>
<svg width="1629" height="834" viewBox="0 0 1629 834"><g transform="translate(1389,754)"><path d="M4.6 4.9 H7.8 V11.2 H10.6 M7.8 4.9 H10.6" fill="none" stroke="#9c9c9c" stroke-width="1"/>
<circle cx="2.6" cy="4.8" r="2" fill="#8c9cf0" stroke="#4a5fd0" stroke-width="1"/>
<circle cx="12.9" cy="4.5" r="1.9" fill="#fff" stroke="#a9a9ad" stroke-width="1.2"/>
<circle cx="12.9" cy="11.3" r="1.9" fill="#fff" stroke="#a9a9ad" stroke-width="1.2"/></g></svg>
<div class="clip" style="left:1410px;top:752px;width:59px;height:20px"><span class="t" style="left:5.00px;top:3px;font-size:14px;transform:scaleX(0.9053);color:#484a4e;">Adaptación</span></div>
<span class="t" style="left:1473.59px;top:755px;font-size:14px;transform:scaleX(0.9201);color:#484a4e;">Elaboración</span>
<div class="clip" style="left:1605px;top:752px;width:15px;height:20px"><span class="t" style="left:4.27px;top:3px;font-size:14px;transform:scaleX(0.9054);color:#484a4e;">I+D</span></div>
<div class="b" style="left:4px;top:807px;width:12px;height:12px;border:1px solid #b2b2b2;border-radius:2px;background:linear-gradient(#f3f3f3,#e3e3e3)"></div>
<svg width="1629" height="834" viewBox="0 0 1629 834"><path d="M6.8 813.3 L9.2 815.8 L13.2 809.8" fill="none" stroke="#444" stroke-width="2.3"/></svg>
<div class="b" style="left:35px;top:805px;width:14px;height:14px;border-radius:50%;background:#0fae57"></div>
<div class="b" style="left:64px;top:804px;width:16px;height:16px;background:#c08b2d"></div>
<span class="t" style="left:67.99px;top:806px;font-size:12px;transform:scaleX(1.0147);color:#fff;font-weight:bold;">P</span>
<span class="t" style="left:93.55px;top:805px;font-size:14px;transform:scaleX(0.9510);color:#484a4e;">PR-2374-13080008</span>
<span class="t" style="left:243.97px;top:805px;font-size:14px;transform:scaleX(0.8929);color:#484a4e;">Compra de Local 180</span>
<div class="b" style="left:502px;top:807px;width:9px;height:9px;border-radius:50%;background:radial-gradient(circle at 35% 30%,#fff7a8,#d9c43c 75%)"></div>
<div class="clip" style="left:520px;top:802px;width:67.5px;height:20px"><span class="t" style="left:4.89px;top:3px;font-size:14px;transform:scaleX(0.9226);color:#484a4e;">Pendiente</span></div>
<span class="t" style="left:594.55px;top:805px;font-size:14px;transform:scaleX(0.8392);color:#484a4e;">46 %</span>
<div class="b" style="left:632px;top:805px;width:47px;height:10px;background:#7dc23c"></div>
<span class="t" style="left:708.51px;top:805px;font-size:14px;transform:scaleX(0.9146);color:#484a4e;">900.000,00 $</span>
<span class="t" style="left:857.76px;top:805px;font-size:14px;transform:scaleX(0.9146);color:#484a4e;">0,00 $</span>
<span class="t" style="left:928.61px;top:805px;font-size:14px;transform:scaleX(0.9146);color:#484a4e;">900.000,00 $</span>
<span class="t" style="left:1026.32px;top:805px;font-size:14px;transform:scaleX(0.9673);color:#484a4e;">22-01-2019</span>
<span class="t" style="left:1124.22px;top:805px;font-size:14px;transform:scaleX(0.9603);color:#484a4e;">02-04-2019</span>
<svg width="1629" height="834" viewBox="0 0 1629 834"><g transform="translate(1209,804)"><path d="M1.3 1.6 V11 H11.6 Z" fill="#f4cf98" stroke="#d88f45" stroke-width="1.1" stroke-linejoin="round"/>
<path d="M3.6 6.6 V9 H6.3 Z" fill="#fff" stroke="#d88f45" stroke-width="0.6"/>
<rect x="1.1" y="11.6" width="14.3" height="3" fill="#efc187" stroke="#c98b4b" stroke-width="0.9"/>
<path d="M3 11.8 V13.2 M5 11.8 V13.2 M7 11.8 V13.2 M9 11.8 V13.2 M11 11.8 V13.2 M13 11.8 V13.2" stroke="#c98b4b" stroke-width="0.6"/>
<path d="M8 8.6 L15 1.9" stroke="#b59a2a" stroke-width="2.6" stroke-linecap="butt"/>
<path d="M8.3 8.4 L14.3 2.6" stroke="#f5e04a" stroke-width="1.4"/>
<path d="M14 2.9 L15.2 1.7" stroke="#e88a8a" stroke-width="2"/>
<path d="M7.1 9.5 L8.4 8.2" stroke="#222" stroke-width="1.6"/></g></svg>
<div class="clip" style="left:1230px;top:802px;width:59px;height:20px"><span class="t" style="left:4.70px;top:3px;font-size:14px;transform:scaleX(0.9053);color:#484a4e;">En borrador</span></div>
<svg width="1629" height="834" viewBox="0 0 1629 834"><g transform="translate(1299,804)"><path d="M8.8 7.6 L2.9 15" stroke="#b98a55" stroke-width="2.5" stroke-linecap="round"/>
<path d="M8.6 7.9 L3.1 14.8" stroke="#e9b983" stroke-width="1.1" stroke-linecap="round"/>
<path d="M0.5 5.8 C3.4 5.2 6.2 3.2 8.6 0.9 C10.8 2.2 13.4 2.9 16 3.1 C14.2 4.6 12.4 6.4 10.9 8.2 C9.2 7.9 7.6 6.9 5.8 6.2 C4 5.6 2.2 5.8 0.5 5.8 Z" fill="#63c896" stroke="#46a97a" stroke-width="0.7" stroke-linejoin="round"/></g></svg>
<span class="t" style="left:1324.75px;top:805px;font-size:14px;transform:scaleX(0.9559);color:#484a4e;">Normal</span>
<svg width="1629" height="834" viewBox="0 0 1629 834"><g transform="translate(1389,804)"><path d="M4.6 4.9 H7.8 V11.2 H10.6 M7.8 4.9 H10.6" fill="none" stroke="#9c9c9c" stroke-width="1"/>
<circle cx="2.6" cy="4.8" r="2" fill="#8c9cf0" stroke="#4a5fd0" stroke-width="1"/>
<circle cx="12.9" cy="4.5" r="1.9" fill="#fff" stroke="#4f66cf" stroke-width="1.2"/>
<circle cx="12.9" cy="11.3" r="1.9" fill="#fff" stroke="#4f66cf" stroke-width="1.2"/></g></svg>
<div class="clip" style="left:1410px;top:802px;width:59px;height:20px"><span class="t" style="left:5.17px;top:3px;font-size:14px;transform:scaleX(0.9053);color:#484a4e;">Gestión de proyectos</span></div>
<span class="t" style="left:1473.59px;top:805px;font-size:14px;transform:scaleX(0.9201);color:#484a4e;">Elaboración</span>
<div class="clip" style="left:1605px;top:802px;width:15px;height:20px"><span class="t" style="left:4.40px;top:3px;font-size:14px;transform:scaleX(0.9053);color:#484a4e;">Programa</span></div>
</body></html>
